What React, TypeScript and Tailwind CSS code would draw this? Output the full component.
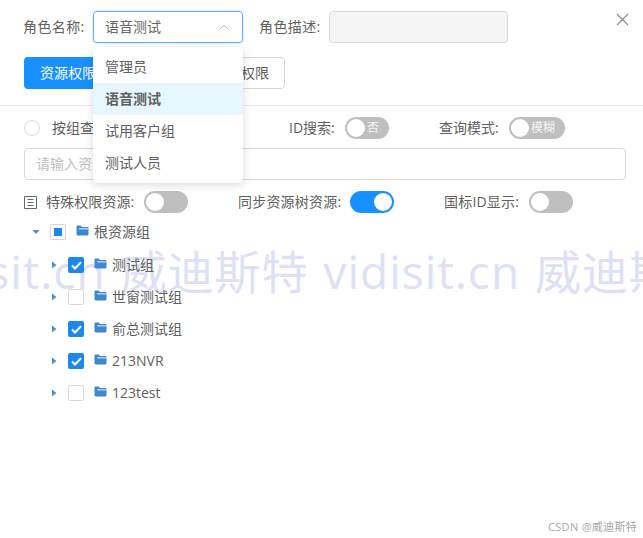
import React from "react";

const fonts = "font-['Open_Sans','Noto_Sans_CJK_SC',sans-serif]";

const Toggle = ({ on = false, text, width = "w-[44px]" }: { on?: boolean; text?: string; width?: string }) => (
  <div
    className={`flex h-[22px] shrink-0 items-center rounded-full ${width} ${
      on ? "justify-end bg-[#1890ff]" : "justify-start bg-[#bfbfbf]"
    }`}
  >
    <span className="mx-[2px] h-[18px] w-[18px] rounded-full bg-white" />
    {text && <span className="text-[12px] leading-none text-[#f5f5f5]">{text}</span>}
  </div>
);

const Caret = ({ open = false }: { open?: boolean }) => (
  <svg width="8" height="8" viewBox="0 0 8 8" className="shrink-0">
    {open ? <path d="M0.5 2 L7.5 2 L4 6 Z" fill="#4f8fc4" /> : <path d="M2 0.5 L6.5 4 L2 7.5 Z" fill="#4f8fc4" />}
  </svg>
);

const Folder = () => (
  <svg width="13" height="11" viewBox="0 0 13 11" className="mb-[3px] shrink-0">
    <path d="M1.5 0.5 H4.5 L6 2 H11.5 A1 1 0 0 1 12.5 3 V9 A1.5 1.5 0 0 1 11 10.5 H2 A1.5 1.5 0 0 1 0.5 9 V1.5 A1 1 0 0 1 1.5 0.5 Z" fill="#3f87d0" />
    <path d="M3 3 H12.5 V4.5 H3 Z" fill="#a9d0f2" />
  </svg>
);

const Box = ({ state }: { state: "on" | "off" | "half" }) => {
  if (state === "on") {
    return (
      <span className="flex h-4 w-4 shrink-0 items-center justify-center rounded-[2px] bg-[#1a88ee]">
        <svg width="11" height="9" viewBox="0 0 11 9">
          <path d="M1 4.5 L4 7.5 L10 1.2" fill="none" stroke="#fff" strokeWidth="2" />
        </svg>
      </span>
    );
  }
  return (
    <span className="flex h-4 w-4 shrink-0 items-center justify-center rounded-[2px] border border-[#d9d9d9] bg-white">
      {state === "half" && <span className="h-2 w-2 bg-[#1a88ee]" />}
    </span>
  );
};

const TreeRow = ({ label, state }: { label: string; state: "on" | "off" }) => (
  <div className="flex h-8 items-center pl-[50px]">
    <span className="flex w-[18px]">
      <Caret />
    </span>
    <Box state={state} />
    <span className="ml-[10px] mr-[5px] flex">
      <Folder />
    </span>
    <span>{label}</span>
  </div>
);

const menu = ["管理员", "语音测试", "试用客户组", "测试人员"];

export default function App() {
  return (
    <div className={`relative h-[538px] w-[643px] overflow-hidden bg-white text-[14px] leading-[22px] text-[#606060] ${fonts}`}>
      {/* watermark sits behind the form */}
      <div className="pointer-events-none absolute left-[-91px] top-[236px] whitespace-nowrap text-[46px] leading-[70px] tracking-[1px] text-[#dde1f3] [word-spacing:2px]">
        vidisit.cn 威迪斯特 vidisit.cn 威迪斯特
      </div>

      <div className="relative pt-[11px]">
        {/* top form */}
        <div className="flex h-8 items-center pl-6">
          <span className="w-[69px] -translate-x-px tracking-[0.4px]">角色名称:</span>
          <div className="flex h-8 w-[150px] items-center justify-between rounded-[4px] border border-[#69b0e8] pl-3 pr-[13px] text-[#666] shadow-[0_0_0_1px_rgba(24,144,255,0.15)]">
            <span className="-translate-x-px">语音测试</span>
            <svg width="10" height="6" viewBox="0 0 10 6">
              <path d="M0.5 5.5 L5 1 L9.5 5.5" fill="none" stroke="#bfbfbf" strokeWidth="1" />
            </svg>
          </div>
          <span className="ml-[17px] w-[69px] -translate-x-px tracking-[0.4px]">角色描述:</span>
          <div className="h-8 w-[179px] rounded-[4px] border border-[#d9d9d9] bg-[#f5f5f5]" />
          <svg width="13" height="13" viewBox="0 0 13 13" className="-mt-4 ml-[108px]">
            <path d="M1 1 L12 12 M12 1 L1 12" stroke="#8c8c8c" strokeWidth="1.1" fill="none" />
          </svg>
        </div>

        <div className="mt-[14px] flex h-8 pl-6">
          <button className="w-[88px] rounded-[4px] bg-[#1890ff] pl-4 text-left text-white">资源权限</button>
          <button className="ml-2 w-[165px] rounded-[4px] border border-[#d9d9d9] bg-white pr-[15px] text-right">功能权限</button>
        </div>

        <div className="mt-4 border-t border-[#e8e8e8]" />

        {/* filters */}
        <div className="mt-[11px] flex h-[22px] items-center pl-6">
          <span className="h-4 w-4 rounded-full border border-[#d9d9d9]" />
          <span className="ml-3 w-[237px]">按组查询:</span>
          <span className="w-[56px]">ID搜索:</span>
          <Toggle text="否" />
          <span className="ml-[50px] w-[70px]">查询模式:</span>
          <Toggle text="模糊" width="w-[56px]" />
        </div>

        <div className="ml-6 mr-[17px] mt-[9px] flex h-8 items-center rounded-[4px] border border-[#d9d9d9] pl-[11px] text-[#bfbfbf]">
          <span>请输入资源名称</span>
        </div>

        <div className="mt-[11px] flex h-[22px] items-center pl-6">
          <svg width="13" height="13" viewBox="0 0 13 13" className="shrink-0">
            <path d="M0.5 0.5 H12.5 V12.5 H0.5 Z M3.5 3.5 H9.5 M3.5 6.5 H9.5 M3.5 9.5 H9.5" fill="none" stroke="#666" strokeWidth="1" />
          </svg>
          <span className="ml-[9px] w-[98px] tracking-[0.1px]">特殊权限资源:</span>
          <Toggle />
          <span className="ml-[50px] w-[112px] tracking-[0.2px]">同步资源树资源:</span>
          <Toggle on />
          <span className="ml-[50px] w-[85px] tracking-[0.2px]">国标ID显示:</span>
          <Toggle />
        </div>

        {/* tree */}
        <div className="mt-[3px]">
          <div className="flex h-8 items-center pl-[32px]">
            <span className="flex w-[18px]">
              <Caret open />
            </span>
            <Box state="half" />
            <span className="ml-[10px] mr-[5px] flex">
              <Folder />
            </span>
            <span>根资源组</span>
          </div>
          <div className="mt-px">
            <TreeRow label="测试组" state="on" />
            <TreeRow label="世窗测试组" state="off" />
            <TreeRow label="俞总测试组" state="on" />
            <TreeRow label="213NVR" state="on" />
            <TreeRow label="123test" state="off" />
          </div>
        </div>
      </div>

      {/* open select menu */}
      <div className="absolute left-[93px] top-[47px] w-[150px] rounded-[4px] bg-white py-1 shadow-[0_2px_8px_rgba(0,0,0,0.15)]">
        {menu.map((m) => (
          <div key={m} className={`flex h-8 items-center pl-3 ${m === "语音测试" ? "bg-[#e6f7ff] font-bold" : ""}`}>
            <span>{m}</span>
          </div>
        ))}
      </div>

      <div className="pointer-events-none absolute right-[6px] top-[519px] text-[11px] leading-4 tracking-[0.3px] text-[#a8a8a8]">
        CSDN @威迪斯特
      </div>
    </div>
  );
}
